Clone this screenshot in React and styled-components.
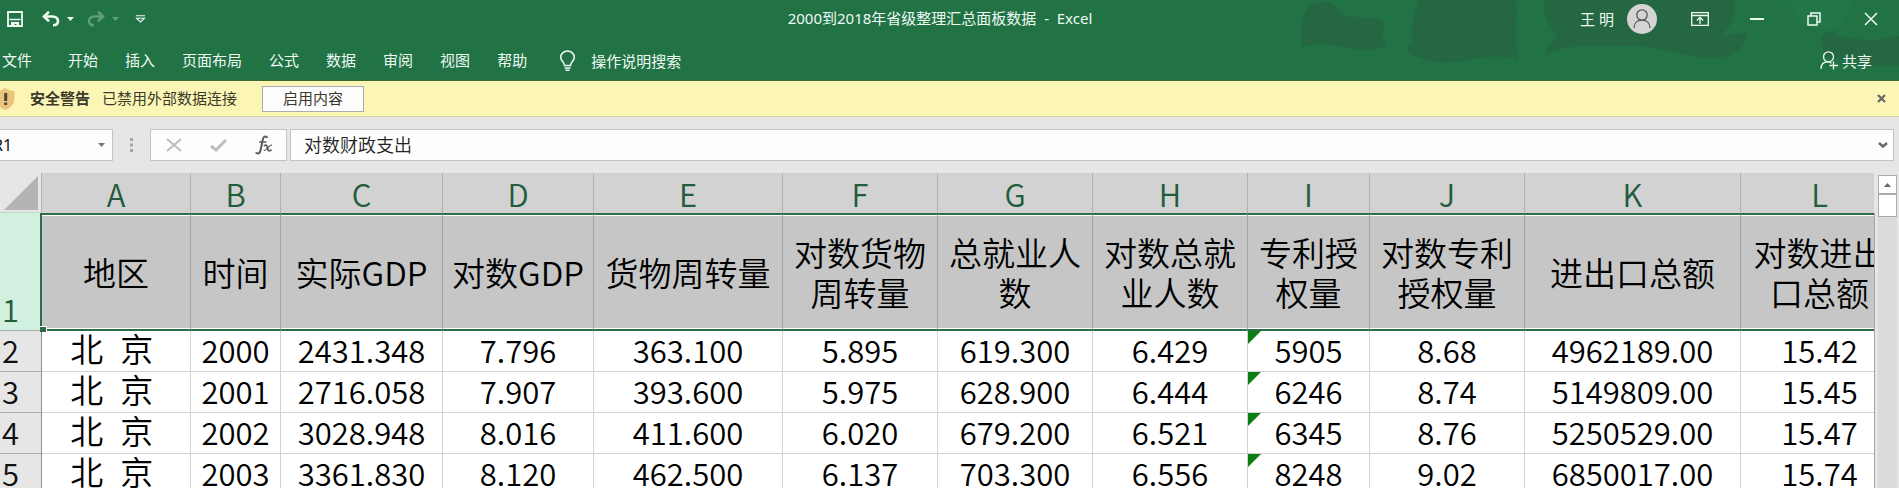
import React from "react";
import styled, { createGlobalStyle, css } from "styled-components";

const GlobalStyle = createGlobalStyle`
  *, *::before, *::after { box-sizing: border-box; }
  body {
    margin: 0;
    background: #e6e6e6;
    font-family: "Noto Sans", "Noto Sans CJK SC", sans-serif;
    font-size: 15px;
    line-height: 20px;
    color: #262626;
  }
  button, input { font: inherit; color: inherit; }
`;

const Window = styled.div`
  display: flex;
  flex-direction: column;
  height: 100vh;
  overflow: hidden;
`;

/* Title bar and ribbon */
const Header = styled.header`
  position: relative;
  flex: none;
  background: #217346;
  color: #effaf3;
  border-bottom: 1px solid #3d6b2e;
`;

const Backdrop = styled.svg`
  position: absolute;
  top: 0;
  right: 0;
  width: 669px;
  height: 80px;
`;

const TitleBar = styled.div`
  position: relative;
  display: grid;
  grid-template-columns: 1fr auto 1fr;
  align-items: center;
  height: 38px;
`;

const QuickAccess = styled.div`
  display: flex;
  align-items: center;
  padding-left: 7px;
`;

const IconButton = styled.button`
  display: flex;
  align-items: center;
  justify-content: center;
  flex: none;
  width: ${(p) => p.$w}px;
  height: ${(p) => p.$h || 24}px;
  margin: 0 0 0 ${(p) => p.$gap || 0}px;
  padding: 0;
  border: 0;
  background: none;
  opacity: ${(p) => (p.$dim ? 0.3 : 1)};
`;

const Title = styled.h1`
  margin: 0;
  padding: 0 19px 2px 0;
  font-size: 15px;
  font-weight: 400;
  white-space: pre;
`;

const WindowControls = styled.div`
  display: flex;
  align-items: center;
  justify-content: flex-end;
`;

const Account = styled.button`
  display: flex;
  align-items: center;
  gap: 13px;
  margin-right: 14px;
  padding: 0;
  border: 0;
  background: none;
`;

const Ribbon = styled.nav`
  position: relative;
  display: flex;
  align-items: center;
  height: 42px;
  padding: 1px 27px 0 2px;
`;

const Tab = styled.a`
  margin-right: ${(p) => (p.$file ? 36 : 27)}px;
  color: inherit;
  text-decoration: none;
`;

const RibbonAction = styled.button`
  display: flex;
  align-items: center;
  gap: ${(p) => p.$gap}px;
  margin-left: ${(p) => (p.$end ? "auto" : "5px")};
  padding: 2px 0 0;
  border: 0;
  background: none;
`;

/* Security message */
const Warning = styled.section`
  display: flex;
  align-items: center;
  flex: none;
  height: 36px;
  padding-right: 11px;
  background: #fcf6b6;
  border-bottom: 1px solid #d2cfa5;
  color: #3b3a2a;
`;

const Shield = styled.svg`
  flex: none;
  margin-left: -5px;
`;

const WarningText = styled.span`
  padding-bottom: 2px;
  margin-left: ${(p) => (p.$strong ? 15 : 12)}px;
  font-weight: ${(p) => (p.$strong ? 700 : 400)};
`;

const EnableButton = styled.button`
  width: 102px;
  height: 26px;
  margin: 0 auto 0 25px;
  padding: 0 0 2px;
  border: 1px solid #ababab;
  background: #fdfdfd;
`;

/* Formula bar */
const FormulaBar = styled.div`
  display: flex;
  align-items: center;
  flex: none;
  height: 48px;
  padding: 8px 5px 0 0;
`;

const box = css`
  display: flex;
  align-items: center;
  height: 32px;
  border: 1px solid #c3c3c3;
  background: #fdfdfd;
`;

const NameBox = styled.div`
  ${box}
  width: 125px;
  margin-left: -12px;
  padding: 0 7px 0 4px;
`;

const NameInput = styled.input`
  flex: 1;
  min-width: 0;
  padding: 0;
  border: 0;
  outline: 0;
  background: none;
  font-size: 16px;
  color: #111;
`;

const Grip = styled.svg`
  flex: none;
  margin: 0 16px 0 17px;
`;

const EntryButtons = styled.div`
  ${box}
  width: 137px;
  margin-right: 3px;
`;

const FormulaField = styled.div`
  ${box}
  flex: 1;
  padding: 0 3px 0 13px;
`;

const FormulaInput = styled.input`
  flex: 1;
  min-width: 0;
  padding: 0 0 2px;
  border: 0;
  outline: 0;
  background: none;
  font-family: "Noto Sans CJK SC DemiLight", "Noto Sans CJK SC", sans-serif;
  font-size: 18px;
  font-weight: 300;
  color: #222;
`;

/* Worksheet */
const Workspace = styled.main`
  display: flex;
  flex: 1;
  min-height: 0;
`;

const SheetView = styled.div`
  flex: 1;
  min-width: 0;
  padding-top: 8px;
  overflow: hidden;
`;

const SheetEdge = styled.div`
  flex: none;
  width: 1px;
  margin-top: 48px;
  background: #a6a6a6;
`;

const Sheet = styled.table`
  width: 1857px;
  table-layout: fixed;
  border-collapse: separate;
  border-spacing: 0;
  background: #fff;
  font-family: "Noto Sans CJK SC DemiLight", "Noto Sans CJK SC", sans-serif;
  font-size: 31px;
  font-weight: 300;
  line-height: 38px;
  color: #000;

  th, td { padding: 0; font-weight: 300; text-align: center; }
`;

const Corner = styled.td`
  height: 40px;
  background: #e6e6e6;
  border-right: 1px solid #b1b1b1;
  border-bottom: 1px solid #c4d8cc;

  svg { display: block; margin: 0 0 0 4px; }
`;

const ColumnHead = styled.th`
  height: 40px;
  background: #d2d2d2;
  border-right: 1px solid #b1b1b1;
  color: #215c3b;

  && { padding-top: 2px; }
`;

const RowHead = styled.th`
  height: 41px;
  background: ${(p) => (p.$active ? "#d2f0e0" : "#e6e6e6")};
  border-right: ${(p) => (p.$active ? "2px solid #2f6b4c" : "1px solid #8f8f8f")};
  border-bottom: 1px solid #ababab;
  color: ${(p) => (p.$active ? "#215c3b" : "#111")};
  vertical-align: bottom;

  && { padding: 0 0 2px 2px; text-align: left; }
`;

const SelectedCell = styled.td`
  position: relative;
  height: 118px;
  background: #c6c6c6;
  border-top: 2px solid #2f6b4c;
  border-bottom: 2px solid #2f6b4c;
  border-right: 1px solid #a3a3a3;
  box-shadow: inset 0 1px #fff, inset 0 -1px #fff;
  font-size: 33px;
  line-height: 40px;
`;

const FillHandle = styled.span`
  position: absolute;
  left: -2px;
  bottom: -3px;
  width: 7px;
  height: 6px;
  background: #2f6b4c;
  border-top: 1px solid #fff;
  border-right: 1px solid #fff;
`;

const DataRow = styled.tr`
  > * { height: ${(p) => (p.$first ? 40 : 41)}px; }
`;

const Cell = styled.td`
  position: relative;
  border-right: 1px solid #d2d2d2;
  border-bottom: 1px solid #d2d2d2;
  white-space: pre;

  && { padding-bottom: 2px; }

  ${(p) =>
    p.$region &&
    css`
      font-family: "Noto Sans", "Noto Sans CJK SC DemiLight", "Noto Sans CJK SC", sans-serif;
      font-size: 33px;
    `}
`;

const ErrorMark = styled.span`
  position: absolute;
  top: 0;
  left: 0;
  width: 13px;
  height: 13px;
  background: #0b7d12;
  clip-path: polygon(0 0, 100% 0, 0 100%);
`;

const ScrollBar = styled.div`
  display: flex;
  flex-direction: column;
  flex: none;
  width: 19px;
  margin: 10px 2px 0 3px;
  background: #dbdbdb;
`;

const ScrollButton = styled.button`
  display: flex;
  align-items: center;
  justify-content: center;
  height: 19px;
  padding: 0;
  border: 1px solid #ababab;
  background: #fff;
`;

const Thumb = styled.div`
  height: 23px;
  border: 1px solid #ababab;
  background: #fff;
`;

const tabs = ["文件", "开始", "插入", "页面布局", "公式", "数据", "审阅", "视图", "帮助"];

const columns = [
  ["A", 149, "地区"],
  ["B", 90, "时间"],
  ["C", 162, "实际GDP"],
  ["D", 151, "对数GDP"],
  ["E", 189, "货物周转量"],
  ["F", 155, "对数货物周转量"],
  ["G", 155, "总就业人数"],
  ["H", 155, "对数总就业人数"],
  ["I", 122, "专利授权量"],
  ["J", 155, "对数专利授权量"],
  ["K", 216, "进出口总额"],
  ["L", 158, "对数进出口总额"],
];

const rows = [
  ["北  京 ", "2000", "2431.348", "7.796", "363.100", "5.895", "619.300", "6.429", "5905", "8.68", "4962189.00", "15.42"],
  ["北  京 ", "2001", "2716.058", "7.907", "393.600", "5.975", "628.900", "6.444", "6246", "8.74", "5149809.00", "15.45"],
  ["北  京 ", "2002", "3028.948", "8.016", "411.600", "6.020", "679.200", "6.521", "6345", "8.76", "5250529.00", "15.47"],
  ["北  京 ", "2003", "3361.830", "8.120", "462.500", "6.137", "703.300", "6.556", "8248", "9.02", "6850017.00", "15.74"],
];

const Caret = ({ color = "currentColor", up }) => (
  <svg width="7" height="4" viewBox="0 0 7 4" aria-hidden="true">
    <path d={up ? "M0 4h7L3.5 0z" : "M0 0h7L3.5 4z"} fill={color} />
  </svg>
);

const UndoIcon = ({ flip }) => (
  <svg width="18" height="16" viewBox="0 0 18 16" fill="none" stroke="currentColor" aria-hidden="true">
    <g transform={flip ? "matrix(-1 0 0 1 18 0)" : undefined}>
      <path d="M2 5.500h8.500c3.200 0 5.500 1.800 5.500 4.500s-2 4.300-5 4.300" strokeWidth="2.600" />
      <path d="M7 .8 2 5.500l5 4.700" strokeWidth="2.600" />
    </g>
  </svg>
);

function TopArea() {
  return (
    <Header>
      <Backdrop viewBox="0 0 669 80" aria-hidden="true">
        <g fill="#246742">
          <path d="M72 40C69 25 72 5 90 2c10-1 16 4 20 10 10 8 38 4 43 10 4 8-5 20 5 19-2 9-18 11-34 8-18-3-38-9-54-1 0-4 3-5 2-8z" />
          <path d="M188 0h98c3 16-4 32 2 50l0 10c-10-4-28-5-44-1-20 5-48 6-66-7-4-7 6-5 5-12-4-12 2-28 5-40z" />
          <path d="M314 0h190c4 14-2 26-14 36 10-2 24-1 26-6 4 14-12 28-30 28-36 0-50-12-86-12-34 0-60-4-84 9 0-12 12-14 10-22-8-8-14-20-12-33z" />
          <path d="M592 45c-3-12 6-15 15-11 6 6 18 2 28 7l34-5v29c-22 4-48-5-72-8-4-4-4-8-5-12z" />
        </g>
        <path d="M560 0h60c0 16-8 28-22 29-18 2-36-10-38-29z" fill="#227748" />
      </Backdrop>

      <TitleBar>
        <QuickAccess>
          <IconButton $w={16} aria-label="保存">
            <svg width="16" height="16" viewBox="0 0 16 16" fill="none" stroke="currentColor">
              <path d="M1 1h14v14H1z" strokeWidth="1.800" />
              <path d="M2.500 8.500h11" strokeWidth="1.500" />
              <path d="M4 16v-5h8v5H9.500v-3h-2v3z" fill="currentColor" stroke="none" />
            </svg>
          </IconButton>
          <IconButton $w={18} $gap={19} aria-label="撤消"><UndoIcon /></IconButton>
          <IconButton $w={7} $gap={7} aria-label="撤消选项"><Caret /></IconButton>
          <IconButton $w={18} $gap={13} $dim aria-label="恢复"><UndoIcon flip /></IconButton>
          <IconButton $w={7} $gap={7} $dim aria-label="恢复选项"><Caret /></IconButton>
          <IconButton $w={11} $gap={16} aria-label="自定义快速访问工具栏">
            <svg width="11" height="8" viewBox="0 0 11 8" fill="none" stroke="currentColor">
              <path d="M1 .7h9M1.500 3.200h8L5.500 7z" strokeWidth="1.100" />
            </svg>
          </IconButton>
        </QuickAccess>
        <Title>{"2000到2018年省级整理汇总面板数据  -  Excel"}</Title>
        <WindowControls>
          <Account>
            <span>王 明</span>
            <svg width="30" height="30" viewBox="0 0 30 30" fill="none" stroke="#555" strokeWidth="1.300" aria-hidden="true">
              <circle cx="15" cy="15" r="15" fill="#d4d4d4" stroke="none" />
              <circle cx="15" cy="11" r="5.200" />
              <path d="M7 24c0-5 3.500-7.800 8-7.800s8 2.800 8 7.800" />
            </svg>
          </Account>
          <IconButton $w={57} $h={38} aria-label="功能区显示选项">
            <svg width="18" height="14" viewBox="0 0 18 14" fill="none" stroke="currentColor" strokeWidth="1.300">
              <path d="M.7.7h16.600v12.600H.7zM.7 3.500h16.600M9 12V5.500M5.800 8.500 9 5.300l3.200 3.200" />
            </svg>
          </IconButton>
          <IconButton $w={57} $h={38} aria-label="最小化">
            <svg width="14" height="2" viewBox="0 0 14 2"><path d="M0 0h14v2H0z" fill="currentColor" /></svg>
          </IconButton>
          <IconButton $w={57} $h={38} aria-label="还原">
            <svg width="14" height="14" viewBox="0 0 14 14" fill="none" stroke="currentColor" strokeWidth="1.500">
              <path d="M1 4h9v9H1zM4 4V1h9v9h-3" />
            </svg>
          </IconButton>
          <IconButton $w={57} $h={38} aria-label="关闭">
            <svg width="14" height="14" viewBox="0 0 14 14" stroke="currentColor" strokeWidth="1.500">
              <path d="m1 1 12 12M13 1 1 13" />
            </svg>
          </IconButton>
        </WindowControls>
      </TitleBar>

      <Ribbon>
        {tabs.map((t, i) => (
          <Tab key={t} href="#" $file={i === 0}>{t}</Tab>
        ))}
        <RibbonAction $gap={15}>
          <svg width="17" height="21" viewBox="0 0 17 21" fill="none" stroke="currentColor" strokeWidth="1.500" aria-hidden="true">
            <path d="M5.500 15.500C5.500 12 1.700 11 1.700 7.300a6.800 6.300 0 0 1 13.600 0c0 3.700-3.800 4.700-3.800 8.200zM5.500 18h6M6.500 20.200h4" />
          </svg>
          操作说明搜索
        </RibbonAction>
        <RibbonAction $gap={3} $end>
          <svg width="19" height="19" viewBox="0 0 19 19" fill="none" stroke="currentColor" strokeWidth="1.300" aria-hidden="true">
            <circle cx="8.500" cy="5.800" r="5" />
            <path d="M1 18c0-4 2-7.200 6.500-7.200 2 0 3 .6 4 1.500M13.500 10.500v8M9.500 14.500h8.500" />
          </svg>
          共享
        </RibbonAction>
      </Ribbon>
    </Header>
  );
}

export default function App() {
  return (
    <Window>
      <GlobalStyle />
      <TopArea />

      <Warning>
        <Shield width="20" height="22" viewBox="0 0 20 22" aria-hidden="true">
          <path d="M10 0c3 2 6 3 9.500 3v7c0 6-4 10-9.500 12C4.500 20 .5 16 .5 10V3C4 3 7 2 10 0z" fill="#ecc57c" />
          <path d="M9.200 5h3v8h-3zM9.200 14.500h3v2.500h-3z" fill="#4d4537" />
        </Shield>
        <WarningText as="strong" $strong>安全警告</WarningText>
        <WarningText>已禁用外部数据连接</WarningText>
        <EnableButton>启用内容</EnableButton>
        <IconButton $w={14} aria-label="关闭消息">
          <svg width="9" height="9" viewBox="0 0 9 9" stroke="#666" strokeWidth="2.200"><path d="m1 1 7 7M8 1 1 8" /></svg>
        </IconButton>
      </Warning>

      <FormulaBar>
        <NameBox>
          <NameInput aria-label="名称框" defaultValue="R1" />
          <Caret color="#777" />
        </NameBox>
        <Grip width="4" height="14" viewBox="0 0 4 14" aria-hidden="true">
          <path d="M0 0h3v3H0zM0 5.500h3v3H0zM0 11h3v3H0z" fill="#a5a5a5" />
        </Grip>
        <EntryButtons>
          <IconButton $w={45} aria-label="取消">
            <svg width="16" height="14" viewBox="0 0 16 14" stroke="#bdbdbd" strokeWidth="2"><path d="m1 1 14 12M15 1 1 13" /></svg>
          </IconButton>
          <IconButton $w={45} aria-label="输入">
            <svg width="17" height="13" viewBox="0 0 17 13" fill="none" stroke="#bdbdbd" strokeWidth="3"><path d="m1 7 5 4L16 1" /></svg>
          </IconButton>
          <IconButton $w={45} aria-label="插入函数">
            <svg width="18" height="20" viewBox="0 0 18 20" fill="none" stroke="#5c5c5c" strokeLinecap="round" aria-hidden="true">
              <path d="M12 2.200C10 .4 8.200 2 7.700 5L5.600 15c-.6 3-2.300 4.300-4.300 3" strokeWidth="2" />
              <path d="M4.500 7h6.500" strokeWidth="1.300" />
              <path d="M9.500 10.500c2-1 2.500 0 3 2.500s1 3.500 3.500 2.200" strokeWidth="1.700" />
              <path d="M16.500 10.200c-2-.5-4.800 5.500-7.300 5.300" strokeWidth="1.200" />
            </svg>
          </IconButton>
        </EntryButtons>
        <FormulaField>
          <FormulaInput aria-label="编辑栏" defaultValue="对数财政支出" />
          <IconButton $w={14} aria-label="展开编辑栏">
            <svg width="10" height="6" viewBox="0 0 10 6" fill="none" stroke="#666" strokeWidth="2.400"><path d="m1 1 4 3.500L9 1" /></svg>
          </IconButton>
        </FormulaField>
      </FormulaBar>

      <Workspace>
        <SheetView>
          <Sheet>
            <colgroup>
              <col width="42" />
              {columns.map(([k, w]) => <col key={k} width={w} />)}
            </colgroup>
            <thead>
              <tr>
                <Corner>
                  <svg width="34" height="34" viewBox="0 0 34 34" aria-hidden="true"><path d="M34 0v34H0z" fill="#b4b4b4" /></svg>
                </Corner>
                {columns.map(([k]) => <ColumnHead key={k} scope="col">{k}</ColumnHead>)}
              </tr>
            </thead>
            <tbody>
              <tr>
                <RowHead scope="row" $active>1</RowHead>
                {columns.map(([k, , label], i) => (
                  <SelectedCell key={k}>
                    {label}
                    {i === 0 && <FillHandle />}
                  </SelectedCell>
                ))}
              </tr>
              {rows.map((row, r) => (
                <DataRow key={r} $first={r === 0}>
                  <RowHead scope="row">{r + 2}</RowHead>
                  {row.map((v, c) => (
                    <Cell key={c} $region={c === 0}>
                      {c === 8 && <ErrorMark />}
                      {v}
                    </Cell>
                  ))}
                </DataRow>
              ))}
            </tbody>
          </Sheet>
        </SheetView>
        <SheetEdge />
        <ScrollBar>
          <ScrollButton aria-label="向上滚动"><Caret color="#666" up /></ScrollButton>
          <Thumb />
        </ScrollBar>
      </Workspace>
    </Window>
  );
}
